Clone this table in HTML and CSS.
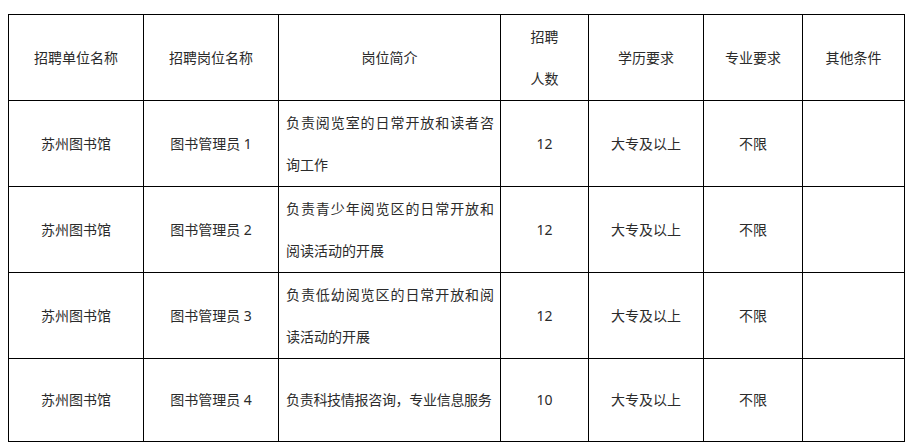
FILE: index.html
```html
<!DOCTYPE html>
<html lang="zh-CN">
<head>
<meta charset="utf-8">
<title>招聘岗位</title>
<link rel="stylesheet" href="styles.css">
</head>
<body>
<table class="jobs">
  <colgroup>
    <col class="c-unit">
    <col class="c-post">
    <col class="c-desc">
    <col class="c-num">
    <col class="c-edu">
    <col class="c-major">
    <col class="c-other">
  </colgroup>
  <thead>
    <tr class="row-head">
      <th>招聘单位名称</th>
      <th>招聘岗位名称</th>
      <th>岗位简介</th>
      <th><span class="line">招聘</span><span class="line">人数</span></th>
      <th>学历要求</th>
      <th>专业要求</th>
      <th>其他条件</th>
    </tr>
  </thead>
  <tbody>
    <tr class="row">
      <td>苏州图书馆</td>
      <td>图书管理员 1</td>
      <td class="desc"><span class="line full">负责阅览室的日常开放和读者咨</span><span class="line">询工作</span></td>
      <td>12</td>
      <td>大专及以上</td>
      <td>不限</td>
      <td></td>
    </tr>
    <tr class="row">
      <td>苏州图书馆</td>
      <td>图书管理员 2</td>
      <td class="desc"><span class="line full">负责青少年阅览区的日常开放和</span><span class="line">阅读活动的开展</span></td>
      <td>12</td>
      <td>大专及以上</td>
      <td>不限</td>
      <td></td>
    </tr>
    <tr class="row">
      <td>苏州图书馆</td>
      <td>图书管理员 3</td>
      <td class="desc"><span class="line full">负责低幼阅览区的日常开放和阅</span><span class="line">读活动的开展</span></td>
      <td>12</td>
      <td>大专及以上</td>
      <td>不限</td>
      <td></td>
    </tr>
    <tr class="row row-last">
      <td>苏州图书馆</td>
      <td>图书管理员 4</td>
      <td class="desc"><span class="line tight">负责科技情报咨询，专业信息服务</span></td>
      <td>10</td>
      <td>大专及以上</td>
      <td>不限</td>
      <td></td>
    </tr>
  </tbody>
</table>
</body>
</html>
```

FILE: styles.css
```css
html, body {
  margin: 0;
  padding: 0;
  background: #ffffff;
}

body {
  padding: 14px 0 0 8px;
  font-family: "Noto Sans", "Noto Sans CJK SC", sans-serif;
  font-size: 14px;
  color: #2b2b2b;
}

.jobs {
  table-layout: fixed;
  border-collapse: collapse;
  width: 897px;
}

.c-unit { width: 135px; }
.c-post { width: 135px; }
.c-desc { width: 222px; }
.c-num { width: 88px; }
.c-edu { width: 115px; }
.c-major { width: 99px; }
.c-other { width: 102px; }

.jobs th,
.jobs td {
  border: 1px solid #000000;
  padding: 0 6px;
  text-align: center;
  vertical-align: middle;
  font-weight: normal;
  line-height: 42px;
  white-space: nowrap;
}

.row-head,
.row {
  height: 86px;
}

.row-last {
  height: 83px;
}

.line {
  display: block;
}

.jobs td.desc {
  text-align: left;
  padding: 0 6px 0 7px;
}

.full {
  text-align: justify;
  text-align-last: justify;
  white-space: normal;
}

.tight {
  letter-spacing: -0.3px;
}
```
